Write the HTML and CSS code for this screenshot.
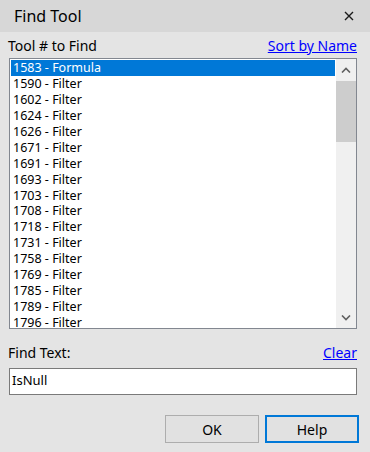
FILE: index.html
```html
<!DOCTYPE html>
<html lang="en">
<head>
  <meta charset="UTF-8">
  <title>Find Tool</title>
  <link rel="stylesheet" href="styles.css">
</head>
<body>
  <div class="dialog">
    <header class="titlebar">
      <span class="title">Find Tool</span>
      <svg class="close" width="10" height="10" viewBox="0 0 10 10">
        <path d="M1 1 L9 9 M9 1 L1 9" stroke="#1a1a1a" stroke-width="1.4" fill="none"/>
      </svg>
    </header>

    <div class="content">
      <div class="label-row">
        <span>Tool # to Find</span>
        <a href="#" class="link">Sort by Name</a>
      </div>

      <div class="listbox">
        <ul class="items">
          <li class="selected">1583 - Formula</li>
          <li>1590 - Filter</li>
          <li>1602 - Filter</li>
          <li>1624 - Filter</li>
          <li>1626 - Filter</li>
          <li>1671 - Filter</li>
          <li>1691 - Filter</li>
          <li>1693 - Filter</li>
          <li>1703 - Filter</li>
          <li>1708 - Filter</li>
          <li>1718 - Filter</li>
          <li>1731 - Filter</li>
          <li>1758 - Filter</li>
          <li>1769 - Filter</li>
          <li>1785 - Filter</li>
          <li>1789 - Filter</li>
          <li>1796 - Filter</li>
        </ul>
        <div class="scrollbar">
          <div class="arrow">
            <svg width="10" height="6" viewBox="0 0 10 6">
              <path d="M1 5.5 L5 1.5 L9 5.5" stroke="#606060" stroke-width="1.6" fill="none"/>
            </svg>
          </div>
          <div class="track">
            <div class="thumb"></div>
          </div>
          <div class="arrow">
            <svg width="10" height="6" viewBox="0 0 10 6">
              <path d="M1 0.5 L5 4.5 L9 0.5" stroke="#606060" stroke-width="1.6" fill="none"/>
            </svg>
          </div>
        </div>
      </div>

      <div class="label-row find-row">
        <span>Find Text:</span>
        <a href="#" class="link">Clear</a>
      </div>

      <div class="textbox">IsNull</div>

      <div class="buttons">
        <button class="btn">OK</button>
        <button class="btn btn-default">Help</button>
      </div>
    </div>
  </div>
</body>
</html>
```

FILE: styles.css
```css
* {
  box-sizing: border-box;
  margin: 0;
  padding: 0;
}

body {
  font-family: "Noto Sans", "Liberation Sans", sans-serif;
  background-color: #e4e4e4;
  color: #000;
  width: 370px;
  height: 452px;
  overflow: hidden;
}

.titlebar {
  height: 32px;
  background-color: #d7d7d7;
  display: flex;
  align-items: center;
  justify-content: space-between;
  padding: 0 16px 0 14px;
}

.title {
  font-size: 16px;
}

.close {
  display: block;
}

.content {
  padding: 0 13px 0 9px;
}

.label-row {
  height: 26px;
  display: flex;
  align-items: center;
  justify-content: space-between;
  font-size: 14px;
  margin-left: -1px;
}

.link {
  color: #0000ff;
  text-decoration: underline;
}

.listbox {
  height: 271px;
  border: 1px solid #828790;
  background-color: #fff;
  display: flex;
}

.items {
  list-style: none;
  flex: 1;
  padding: 1px;
  overflow: hidden;
  font-size: 12.5px;
}

.items li {
  height: 15.95px;
  line-height: 16px;
  padding-left: 2px;
  white-space: nowrap;
}

.items li.selected {
  background-color: #0078d7;
  color: #fff;
}

.scrollbar {
  width: 20px;
  background-color: #f0f0f0;
  display: flex;
  flex-direction: column;
}

.arrow {
  height: 21px;
  display: flex;
  align-items: center;
  justify-content: center;
}

.track {
  flex: 1;
}

.thumb {
  height: 61px;
  margin-top: 1px;
  background-color: #cdcdcd;
}

.find-row {
  height: 39px;
  padding-top: 8px;
}

.textbox {
  height: 27px;
  border: 1px solid #7a7a7a;
  background-color: #fff;
  font-size: 13px;
  line-height: 23px;
  padding-left: 2px;
}

.buttons {
  display: flex;
  justify-content: flex-end;
  gap: 6px;
  margin-top: 20px;
  margin-right: -2px;
}

.btn {
  width: 94px;
  height: 28px;
  font-family: inherit;
  font-size: 14px;
  color: #000;
  background-color: #e1e1e1;
  border: 1px solid #adadad;
}

.btn-default {
  border: 2px solid #0078d7;
}
```
